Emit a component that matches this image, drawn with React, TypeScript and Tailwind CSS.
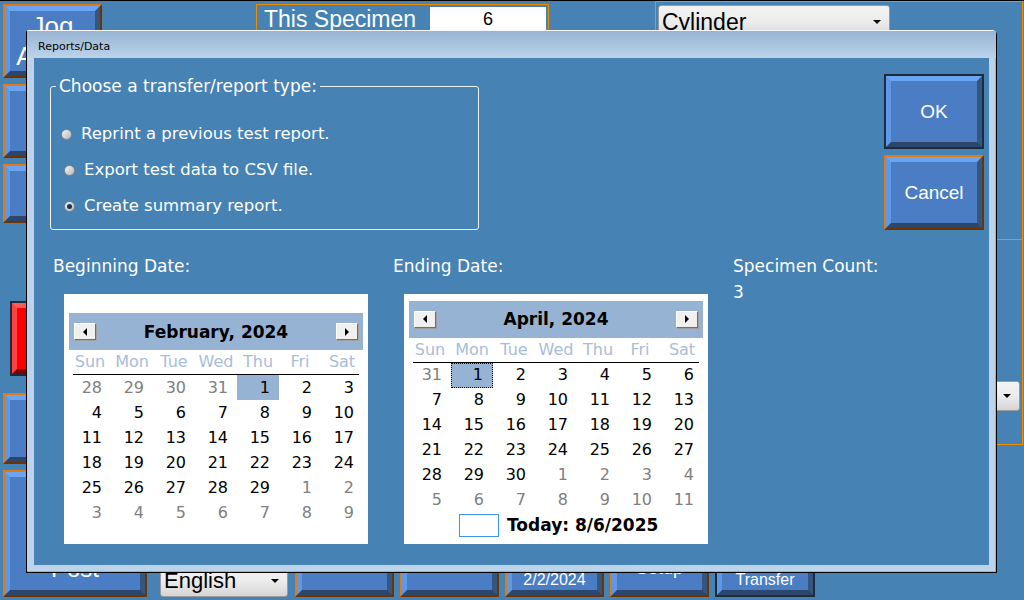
import React from "react";

type Day = { d: number; muted?: boolean; sel?: boolean; focus?: boolean };

function monthDays(lead: number[], count: number, trail: number, selected: number, focus: boolean): Day[] {
  const out: Day[] = [];
  lead.forEach((d) => out.push({ d, muted: true }));
  for (let i = 1; i <= count; i++) out.push({ d: i, sel: i === selected, focus: focus && i === selected });
  for (let i = 1; i <= trail; i++) out.push({ d: i, muted: true });
  return out;
}

const feb = monthDays([28, 29, 30, 31], 29, 9, 1, false);
const apr = monthDays([31], 30, 11, 1, true);
const dayNames = ["Sun", "Mon", "Tue", "Wed", "Thu", "Fri", "Sat"];

// blue bevelled button used all over the app
function Bevel({
  edge = "orange",
  className = "",
  face = "blue",
  children,
}: {
  edge?: "orange" | "dark";
  className?: string;
  face?: "blue" | "red";
  children?: React.ReactNode;
}) {
  const edgeCls =
    edge === "orange"
      ? "border-2 border-[#e07a12] border-r-[#6e3400] border-b-[#6e3400]"
      : "border-2 border-[#1c2c3c]";
  const faceCls =
    face === "red"
      ? "border-t-[#ff5a5a] border-l-[#ff4040] border-r-[#a00000] border-b-[#800000] bg-[#ff0000]"
      : "border-t-[#6aa4f2] border-l-[#5e98e8] border-r-[#35567f] border-b-[#2c466c] bg-[#4a7dc4]";
  return (
    <div className={`${edgeCls} ${className}`}>
      <div className={`h-full w-full border-[5px] ${faceCls} flex flex-col items-center justify-center text-white font-['Liberation_Sans',Arial,sans-serif] leading-tight text-center`}>
        {children}
      </div>
    </div>
  );
}

function Dropdown({ label, className = "" }: { label: string; className?: string }) {
  return (
    <div className={`flex items-center justify-between rounded-[3px] border border-[#9a9a9a] bg-gradient-to-b from-[#f3f3f3] via-[#ececec] to-[#d5d5d5] pl-[3px] pr-[8px] text-black font-['Liberation_Sans',Arial,sans-serif] ${className}`}>
      <span className="leading-none">{label}</span>
      <span className="w-0 h-0 border-x-[4px] border-x-transparent border-t-[4px] border-t-black" />
    </div>
  );
}

function Radio({ checked }: { checked?: boolean }) {
  return (
    <span className="w-[11px] h-[11px] rounded-full border border-[#7d8790] bg-gradient-to-br from-[#f4f4f4] to-[#b8b8b8] flex items-center justify-center">
      {checked && <span className="w-[5px] h-[5px] rounded-full bg-[#17385c]" />}
    </span>
  );
}

function NavBtn({ dir }: { dir: "l" | "r" }) {
  return (
    <div className="w-[22px] h-[17px] bg-[#f0f0f0] border border-t-white border-l-white border-r-[#6e6e6e] border-b-[#6e6e6e] shadow-[1px_1px_0_#a0a0a0] flex items-center justify-center">
      {dir === "l" ? (
        <span className="w-0 h-0 border-y-[4px] border-y-transparent border-r-[4px] border-r-black" />
      ) : (
        <span className="w-0 h-0 border-y-[4px] border-y-transparent border-l-[4px] border-l-black" />
      )}
    </div>
  );
}

function Calendar({ title, days, today }: { title: string; days: Day[]; today?: boolean }) {
  return (
    <div className="w-[304px] h-[250px] bg-white px-[5px] flex flex-col justify-center font-['DejaVu_Sans',Verdana,sans-serif]">
      <div className="h-[37px] bg-[#97b3d3] flex items-center justify-between px-[5px]">
        <NavBtn dir="l" />
        <span className="text-[17px] font-bold text-black">{title}</span>
        <NavBtn dir="r" />
      </div>
      <div className="grid grid-cols-7 h-[24px] items-center text-center text-[16px] text-[#a7bdd9]">
        {dayNames.map((n) => (
          <span key={n}>{n}</span>
        ))}
      </div>
      <div className="h-px bg-black mx-[4px]" />
      <div className="grid grid-cols-7">
        {days.map((x, i) => (
          <div
            key={i}
            className={`h-[25px] flex items-center justify-end pr-[9px] text-[16px] ${x.muted ? "text-[#808080]" : "text-black"} ${x.sel ? "bg-[#97b3d3]" : ""} ${x.focus ? "border border-dotted border-black" : ""}`}
          >
            {x.d}
          </div>
        ))}
      </div>
      {today && (
        <div className="h-[25px] flex items-center pl-[50px] gap-[8px]">
          <span className="w-[40px] h-[23px] border border-[#3c96f0]" />
          <span className="text-[17px] font-bold text-black">Today: 8/6/2025</span>
        </div>
      )}
    </div>
  );
}

function Background() {
  return (
    <div className="flex h-full font-['Liberation_Sans',Arial,sans-serif]">
      {/* left button column */}
      <div className="w-[157px] pl-[3px] pt-[3px] flex flex-col">
        <Bevel className="w-[99px] h-[74px] text-[26px]">
          <span className="leading-[30px]">Jog</span>
          <span className="leading-[30px]">Adjust</span>
        </Bevel>
        <Bevel className="w-[99px] h-[74px] mt-[6px] text-[22px]">
          <span>Load</span>
        </Bevel>
        <Bevel className="w-[99px] h-[59px] mt-[6px] text-[22px]" />
        <Bevel edge="dark" face="red" className="w-[92px] h-[75px] ml-[7px] mt-[78px]" />
        <Bevel className="w-[99px] h-[71px] mt-[17px]" />
        <Bevel className="w-[144px] h-[127px] mt-[6px] text-[24px]">
          <span className="mt-[71px]">Post</span>
        </Bevel>
      </div>

      {/* rest of the screen */}
      <div className="flex-1 flex flex-col">
        <div className="flex">
          <div className="flex-1 pt-[3px]">
            <div className="ml-[99px] w-[293px] h-[70px] border border-[#f08a00] flex items-start pt-[2px] pl-[7px]">
              <span className="text-white text-[23px] leading-[24px] w-[166px]">This Specimen</span>
              <div className="w-[116px] h-[25px] bg-white text-black text-[18px] flex items-center justify-center">6</div>
            </div>
          </div>
          <div className="w-[368px] mr-[1px] flex flex-col">
            <div className="h-[239px] border border-[#f08a00] pt-[3px] pl-[2px]">
              <Dropdown label="Cylinder" className="w-[232px] h-[34px] text-[23px]" />
            </div>
            <div className="h-[205px] border border-t-0 border-[#f08a00] flex justify-end items-start pt-[141px] pr-[2px]">
              <Dropdown label="" className="w-[200px] h-[30px]" />
            </div>
          </div>
        </div>

        <div className="mt-auto mb-[3px] flex items-end pl-[3px] gap-[6px]">
          <Dropdown label="English" className="w-[128px] h-[32px] text-[22px] mr-[1px]" />
          <Bevel className="w-[99px] h-[62px]" />
          <Bevel className="w-[99px] h-[62px]" />
          <Bevel className="w-[99px] h-[62px] text-[16px]">
            <span className="leading-[27px]">Date</span>
            <span className="leading-[27px]">2/2/2024</span>
          </Bevel>
          <Bevel className="w-[99px] h-[62px] text-[18px]">
            <div className="mb-[18px] flex flex-col">
              <span className="leading-[22px]">Test</span>
              <span className="leading-[22px]">Setup</span>
            </div>
          </Bevel>
          <Bevel edge="dark" className="w-[100px] h-[62px] text-[16px]">
            <span className="leading-[27px]">Data</span>
            <span className="leading-[27px]">Transfer</span>
          </Bevel>
        </div>
      </div>
    </div>
  );
}

export default function App() {
  return (
    <div className="relative w-[1024px] h-[600px] overflow-hidden bg-[#4682b4] border-t border-black">
      <Background />

      {/* Reports/Data dialog */}
      <div className="absolute left-[26px] top-[29px] w-[971px] h-[543px] flex flex-col bg-[#bcd3ea] border border-black border-t-[#f4f8fc] border-l-[#000] rounded-tr-[5px] rounded-tl-[3px] shadow-[inset_-1px_-1px_0_#4fd0f0]">
        <div className="h-[27px] bg-gradient-to-b from-[#98b4d2] to-[#bcd3ea] flex items-end pb-[3px] pl-[11px] font-['DejaVu_Sans',Verdana,sans-serif] text-[11px] text-black">
          Reports/Data
        </div>
        <div className="mx-[7px] mb-[7px] flex-1 bg-[#4682b4] text-white font-['DejaVu_Sans',Verdana,sans-serif] flex flex-col">
          <div className="h-[172px] flex justify-between items-start">
            <fieldset className="ml-[16px] mt-[18px] w-[429px] h-[154px] border border-[#eef3f8] rounded-[3px]">
              <legend className="ml-[5px] px-[3px] text-[17px] leading-[20px]">Choose a transfer/report type:</legend>
              <div className="flex flex-col gap-[12px] pt-[26px] text-[16.5px]">
                <label className="h-[24px] flex items-center gap-[9px] pl-[10px]">
                  <Radio />
                  <span>Reprint a previous test report.</span>
                </label>
                <label className="h-[24px] flex items-center gap-[9px] pl-[13px]">
                  <Radio />
                  <span>Export test data to CSV file.</span>
                </label>
                <label className="h-[24px] flex items-center gap-[9px] pl-[13px]">
                  <Radio checked />
                  <span>Create summary report.</span>
                </label>
              </div>
            </fieldset>
            <div className="mr-[5px] mt-[16px] flex flex-col gap-[6px]">
              <Bevel edge="dark" className="w-[100px] h-[75px] text-[19px]">
                OK
              </Bevel>
              <Bevel className="w-[100px] h-[75px] text-[19px]">Cancel</Bevel>
            </div>
          </div>

          <div className="grid grid-cols-[340px_340px_1fr] pl-[19px] mt-[26px] text-[17px] leading-[20px]">
            <div>
              <div>Beginning Date:</div>
              <div className="ml-[11px] mt-[18px]">
                <Calendar title="February, 2024" days={feb} />
              </div>
            </div>
            <div>
              <div>Ending Date:</div>
              <div className="ml-[11px] mt-[18px]">
                <Calendar title="April, 2024" days={apr} today />
              </div>
            </div>
            <div>
              <div>Specimen Count:</div>
              <div className="mt-[6px]">3</div>
            </div>
          </div>
        </div>
      </div>
    </div>
  );
}
